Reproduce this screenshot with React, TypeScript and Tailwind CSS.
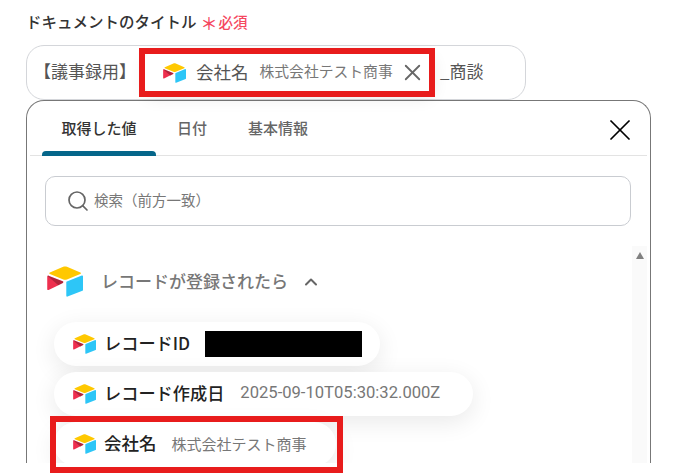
import React from "react";
import { Search, X, ChevronUp } from "lucide-react";

function Logo({ className }: { className: string }) {
  return (
    <svg viewBox="0 0 200 170" className={className} preserveAspectRatio="none">
      <path fill="#FFC800" d="M90 4.6L16 35.2c-4.1 1.7-4.1 7.5.1 9.2l74.4 29.5c6.5 2.6 13.8 2.6 20.3 0l74.4-29.5c4.1-1.6 4.2-7.5.1-9.2L110.9 4.6c-6.7-2.8-14.2-2.8-20.9 0z" />
      <path fill="#2DC6F7" d="M107.2 89.6v73.7c0 3.5 3.5 5.9 6.8 4.6l82.9-32.2c1.9-.7 3.1-2.6 3.1-4.6V56.4c0-3.5-3.5-5.9-6.8-4.6L110.3 85c-1.9.8-3.1 2.6-3.1 4.6z" />
      <path fill="#EE2F4E" d="M87.9 93.4L63.3 105.3l-2.5 1.2-52 24.9c-3.3 1.6-7.5-.8-7.5-4.5V57.7c0-1.3.7-2.5 1.6-3.4.4-.4.8-.7 1.2-.9 1.2-.7 3-.9 4.4-.3l78.8 31.2c4.1 1.6 4.4 7.1.6 8.7z" />
      <path fill="#000" fillOpacity="0.25" d="M87.9 93.4l-24.6 11.9-60.3-51c.4-.4.8-.7 1.2-.9 1.2-.7 3-.9 4.4-.3l78.8 31.2c4.1 1.6 4.4 7.1.5 9.1z" />
    </svg>
  );
}

function Chip({ children, className }: { children: React.ReactNode; className: string }) {
  return (
    <div className={`flex items-center rounded-full bg-white pl-[19px] shadow-[0_6px_24px_rgba(0,0,0,0.09)] ${className}`}>
      {children}
    </div>
  );
}

export default function App() {
  return (
    <div
      className="relative h-[473px] w-[676px] overflow-hidden bg-white px-[26px] pt-[11px]"
      style={{ fontFamily: '"Noto Sans CJK JP", "Noto Sans", sans-serif' }}
    >
      <div className="flex h-[22px] items-center">
        <span className="text-[15.5px] font-medium leading-none text-[#333]">ドキュメントのタイトル</span>
        <span className="ml-[4px] text-[17px] font-medium leading-none text-[#f5485f]">＊</span>
        <span className="ml-[1px] text-[14.5px] font-medium leading-none text-[#f5485f]">必須</span>
      </div>

      <div className="mt-[12px] flex h-[55px] w-[500px] items-center rounded-[18px] border border-[#d4d6da] bg-white pl-[7px] text-[17px] text-[#555]">
        <span className="mb-[3px] w-[110px] shrink-0">【議事録用】</span>
        <div className="flex h-[44px] w-[290px] shrink-0 items-center rounded-[12px] pl-[19px] shadow-[0_4px_16px_rgba(0,0,0,0.08)]">
          <Logo className="h-[20px] w-[23px]" />
          <span className="mb-[2px] ml-[10px] text-[17.5px] leading-none text-[#555]">会社名</span>
          <span className="mb-[2px] ml-[11px] text-[14.8px] leading-none text-[#777]">株式会社テスト商事</span>
          <X className="ml-[6px] h-[27px] w-[27px] shrink-0 text-[#666]" strokeWidth={1.6} />
        </div>
        <span className="mb-[3px] ml-[6px]">_商談</span>
      </div>

      <div className="h-[363px] w-[625px] overflow-hidden rounded-t-[18px] border-x border-t border-[#777] bg-white">
        <div className="mx-[3px] flex h-[55px] items-start border-b border-[#e3e3e3] pl-[12px]">
          <div className="flex h-[55px] w-[114px] flex-col items-center justify-between">
            <span className="mt-[19px] text-[15px] font-medium leading-none text-[#333]">取得した値</span>
            <div className="h-[5px] w-full rounded-t-[4px] bg-[#05668a]" />
          </div>
          <span className="ml-[21px] mt-[19px] text-[15px] font-medium leading-none text-[#666]">日付</span>
          <span className="ml-[41px] mt-[19px] text-[15px] font-medium leading-none text-[#666]">基本情報</span>
          <X className="ml-[294px] mt-[11px] h-[36px] w-[36px] shrink-0 text-black" strokeWidth={1.15} />
        </div>

        <div className="ml-[18px] mt-[20px] flex h-[50px] w-[586px] items-center rounded-[10px] border border-[#c9ccd1] pl-[20px]">
          <Search className="h-[24px] w-[24px] text-[#666]" strokeWidth={1.7} />
          <span className="mb-[1px] ml-[4px] text-[14.5px] leading-none text-[#777]">検索（前方一致）</span>
        </div>

        <div className="relative mt-[20px] h-[217px] pl-[20px] pt-[20px]">
          <div className="absolute right-[3px] top-0 flex h-[217px] w-[15px] justify-center bg-[#fafafa] pt-[6px]">
            <div className="h-0 w-0 border-x-[4.5px] border-b-[7px] border-x-transparent border-b-[#808080]" />
          </div>
          <div className="flex h-[31px] items-center">
            <Logo className="h-[31px] w-[36px]" />
            <span className="mb-[2px] ml-[18px] text-[17px] font-medium leading-none text-[#777]">レコードが登録されたら</span>
            <ChevronUp className="ml-[13px] h-[20px] w-[20px] text-[#666]" strokeWidth={2.4} />
          </div>
          <div className="ml-[7px] mt-[25px] flex flex-col gap-[6px]">
            <Chip className="h-[44px] w-[326px]">
              <Logo className="h-[20px] w-[23px]" />
              <span className="mb-[2px] ml-[8px] text-[17.2px] font-medium leading-none text-[#222]">レコードID</span>
              <div className="ml-[15px] h-[26px] w-[157px] bg-black" />
            </Chip>
            <Chip className="h-[44px] w-[419px]">
              <Logo className="h-[20px] w-[23px]" />
              <span className="mb-[2px] ml-[8px] text-[17.2px] font-medium leading-none text-[#222]">レコード作成日</span>
              <span className="mb-[1px] ml-[16px] font-['Roboto'] text-[16.6px] leading-none text-[#777]">2025-09-10T05:30:32.000Z</span>
            </Chip>
            <Chip className="h-[44px] w-[282px]">
              <Logo className="h-[20px] w-[23px]" />
              <span className="mb-[2px] ml-[8px] text-[17.5px] font-medium leading-none text-[#222]">会社名</span>
              <span className="mb-[2px] ml-[15px] text-[15px] leading-none text-[#777]">株式会社テスト商事</span>
            </Chip>
          </div>
        </div>
      </div>

      <div className="absolute left-[139px] top-[48px] h-[49px] w-[296px] border-[6px] border-[#e81c1c]" />
      <div className="absolute left-[50px] top-[416px] h-[57px] w-[293px] border-[6px] border-[#e81c1c]" />
    </div>
  );
}
